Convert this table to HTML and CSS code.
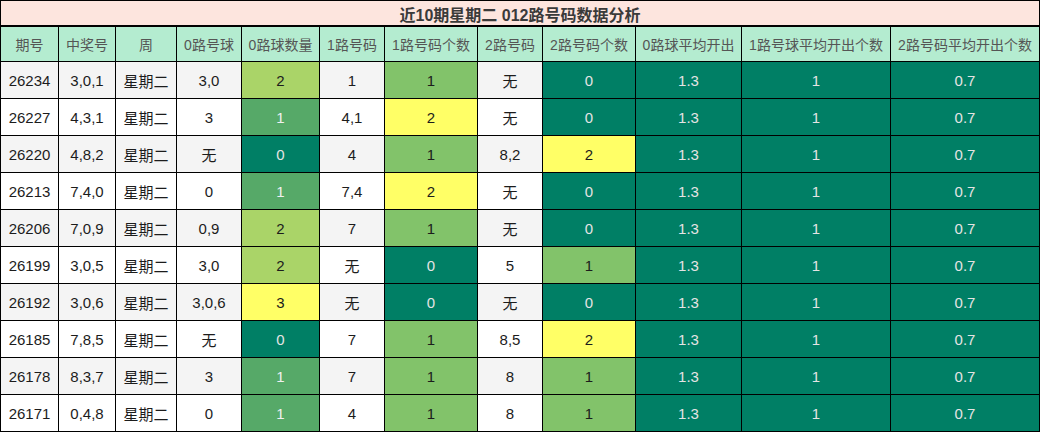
FILE: index.html
```html
<!DOCTYPE html>
<html lang="zh">
<head>
<meta charset="utf-8">
<title>近10期星期二 012路号码数据分析</title>
<link rel="stylesheet" href="styles.css">
</head>
<body>
<div class="grid">
  <div class="title">近10期星期二 012路号码数据分析</div>
  <div class="h">期号</div><div class="h">中奖号</div><div class="h">周</div><div class="h">0路号球</div><div class="h">0路球数量</div><div class="h">1路号码</div><div class="h">1路号码个数</div><div class="h">2路号码</div><div class="h">2路号码个数</div><div class="h">0路球平均开出</div><div class="h">1路号球平均开出个数</div><div class="h">2路号码平均开出个数</div>

  <div class="c g">26234</div><div class="c g">3,0,1</div><div class="c g">星期二</div><div class="c g">3,0</div><div class="c lg">2</div><div class="c g">1</div><div class="c gr">1</div><div class="c g">无</div><div class="c t">0</div><div class="c t">1.3</div><div class="c t">1</div><div class="c t">0.7</div>

  <div class="c">26227</div><div class="c">4,3,1</div><div class="c">星期二</div><div class="c">3</div><div class="c mg">1</div><div class="c">4,1</div><div class="c y">2</div><div class="c">无</div><div class="c t">0</div><div class="c t">1.3</div><div class="c t">1</div><div class="c t">0.7</div>

  <div class="c g">26220</div><div class="c g">4,8,2</div><div class="c g">星期二</div><div class="c g">无</div><div class="c t">0</div><div class="c g">4</div><div class="c gr">1</div><div class="c g">8,2</div><div class="c y">2</div><div class="c t">1.3</div><div class="c t">1</div><div class="c t">0.7</div>

  <div class="c">26213</div><div class="c">7,4,0</div><div class="c">星期二</div><div class="c">0</div><div class="c mg">1</div><div class="c">7,4</div><div class="c y">2</div><div class="c">无</div><div class="c t">0</div><div class="c t">1.3</div><div class="c t">1</div><div class="c t">0.7</div>

  <div class="c g">26206</div><div class="c g">7,0,9</div><div class="c g">星期二</div><div class="c g">0,9</div><div class="c lg">2</div><div class="c g">7</div><div class="c gr">1</div><div class="c g">无</div><div class="c t">0</div><div class="c t">1.3</div><div class="c t">1</div><div class="c t">0.7</div>

  <div class="c">26199</div><div class="c">3,0,5</div><div class="c">星期二</div><div class="c">3,0</div><div class="c lg">2</div><div class="c">无</div><div class="c t">0</div><div class="c">5</div><div class="c gr">1</div><div class="c t">1.3</div><div class="c t">1</div><div class="c t">0.7</div>

  <div class="c g">26192</div><div class="c g">3,0,6</div><div class="c g">星期二</div><div class="c g">3,0,6</div><div class="c y">3</div><div class="c g">无</div><div class="c t">0</div><div class="c g">无</div><div class="c t">0</div><div class="c t">1.3</div><div class="c t">1</div><div class="c t">0.7</div>

  <div class="c">26185</div><div class="c">7,8,5</div><div class="c">星期二</div><div class="c">无</div><div class="c t">0</div><div class="c">7</div><div class="c gr">1</div><div class="c">8,5</div><div class="c y">2</div><div class="c t">1.3</div><div class="c t">1</div><div class="c t">0.7</div>

  <div class="c g">26178</div><div class="c g">8,3,7</div><div class="c g">星期二</div><div class="c g">3</div><div class="c mg">1</div><div class="c g">7</div><div class="c gr">1</div><div class="c g">8</div><div class="c gr">1</div><div class="c t">1.3</div><div class="c t">1</div><div class="c t">0.7</div>

  <div class="c">26171</div><div class="c">0,4,8</div><div class="c">星期二</div><div class="c">0</div><div class="c mg">1</div><div class="c">4</div><div class="c gr">1</div><div class="c">8</div><div class="c gr">1</div><div class="c t">1.3</div><div class="c t">1</div><div class="c t">0.7</div>
</div>
</body>
</html>
```

FILE: styles.css
```css
html, body {
  margin: 0;
  padding: 0;
  background: #ffffff;
}

.grid {
  display: grid;
  grid-template-columns: 57px 56px 60px 64px 77px 64px 92px 64px 92px 105px 148px 148px;
  grid-template-rows: 25px 34px repeat(10, 36px);
  gap: 1px;
  padding: 1px;
  width: 1040px;
  height: 432px;
  box-sizing: border-box;
  background: #000000;
  font-family: "Liberation Sans", "Noto Sans CJK SC", sans-serif;
}

.grid > div {
  display: flex;
  align-items: center;
  justify-content: center;
  white-space: nowrap;
}

.title {
  grid-column: 1 / -1;
  background: #fde5de;
  border-bottom: 1px solid #000000;
  font-size: 16px;
  font-weight: bold;
  color: #3a3a3a;
  box-sizing: border-box;
  padding-top: 1px;
}

.h {
  background: #b4ecd0;
  color: #555555;
  font-size: 14px;
}

.c {
  background: #ffffff;
  color: #1c1c1c;
  font-size: 15px;
}

.c.g { background: #f4f4f4; }
.c.lg { background: #aad468; }
.c.mg { background: #56a968; color: #f0f0f0; }
.c.gr { background: #82c36a; }
.c.y { background: #ffff66; }
.c.t { background: #007f65; color: #e4e4e4; }
```
